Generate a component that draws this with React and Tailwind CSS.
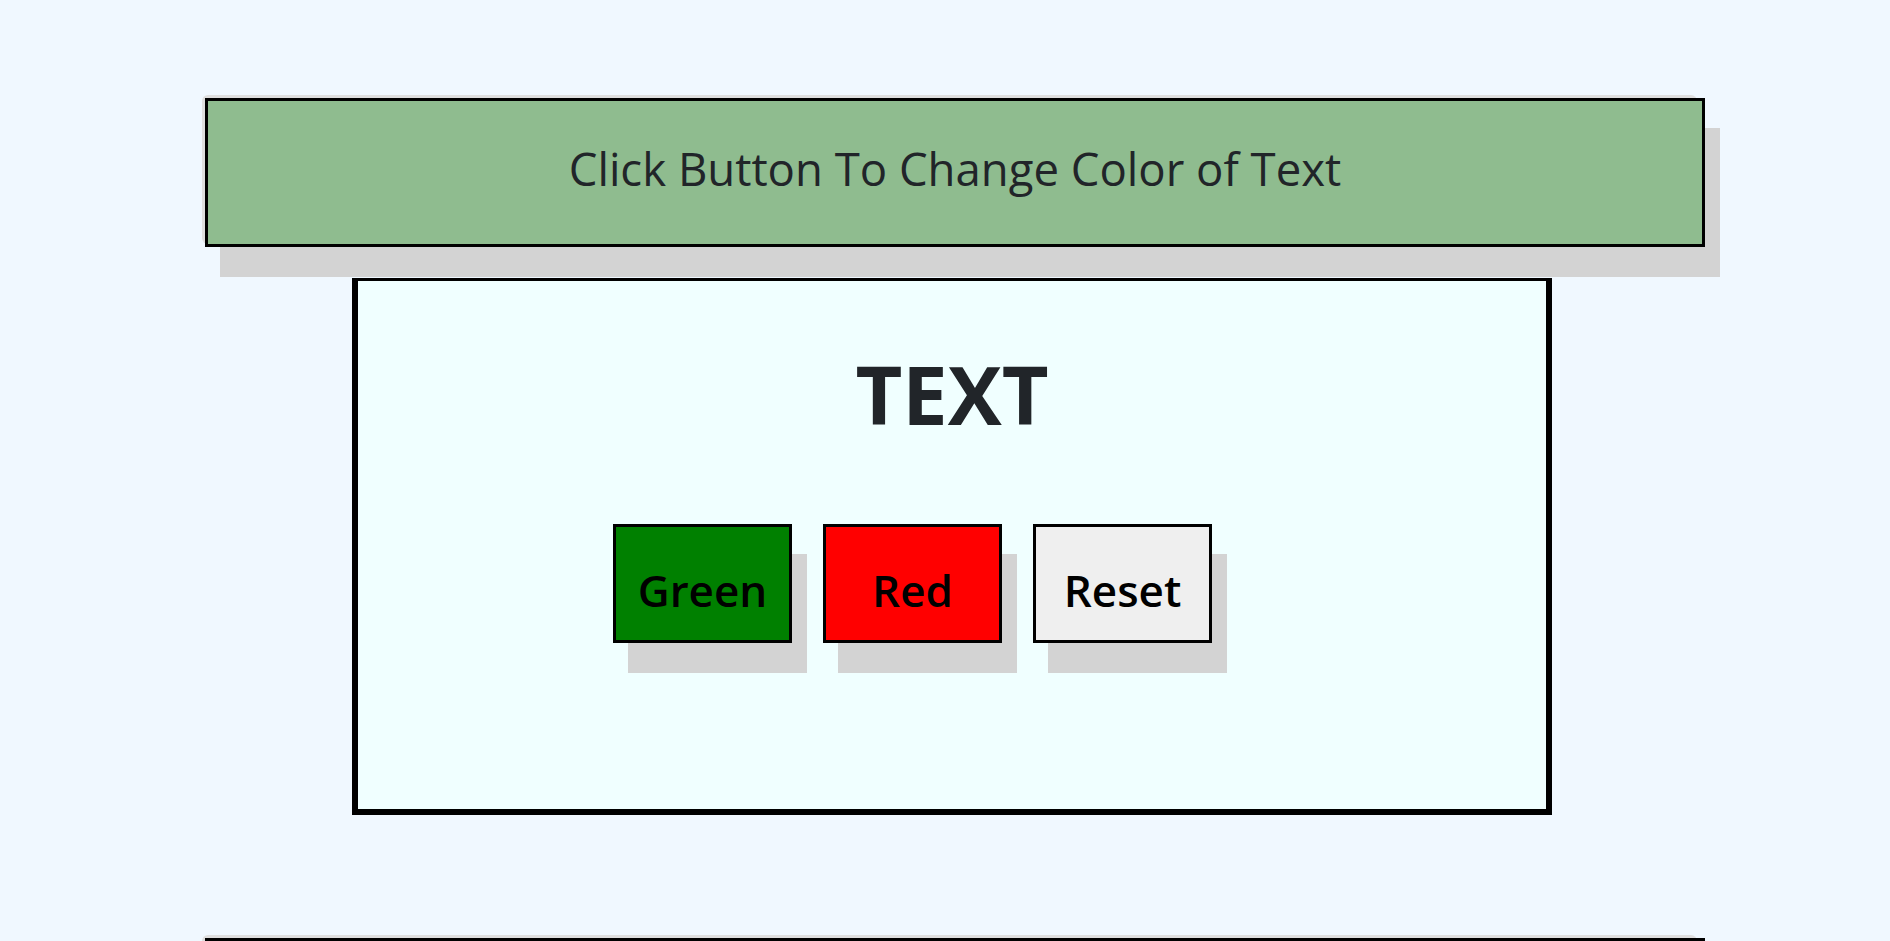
export default function App() {
  const font = { fontFamily: '"Open Sans", "Noto Sans", sans-serif' };
  const btn =
    "w-[179px] h-[119px] border-[3px] border-black text-black text-[44px] font-semibold shadow-[15px_30px_0_#d3d3d3] flex items-center justify-center pt-[12px]";
  return (
    <div className="min-h-screen bg-[#f0f8ff] pt-[95px] overflow-hidden" style={font}>
      <div className="ml-[202px] w-[1495px] h-[149px] rounded-md bg-[#dfdfdf]">
        <div className="relative left-[3px] top-[3px] w-[1500px] h-[149px] border-[3px] border-black bg-[#8fbc8f] shadow-[15px_30px_0_#d3d3d3] flex items-center justify-center pb-[9px]">
          <span className="text-[45.5px] text-[#212529]">Click Button To Change Color of Text</span>
        </div>
      </div>

      <div className="ml-[352px] mt-[34px] w-[1200px] h-[537px] border-[6px] border-t-[3px] border-black bg-[#f0ffff] flex flex-col">
        <h1 className="mt-[72px] text-center text-[81px] leading-none font-bold text-[#212529]">TEXT</h1>
        <div className="mt-[90px] ml-[255px] flex gap-[31px]">
          <button className={`${btn} bg-[#008000]`}>Green</button>
          <button className={`${btn} bg-[#ff0000]`}>Red</button>
          <button className={`${btn} bg-[#efefef]`}>Reset</button>
        </div>
      </div>

      <div className="ml-[202px] mt-[120px] w-[1495px] h-[149px] rounded-md bg-[#dfdfdf]">
        <div className="relative left-[3px] top-[3px] w-[1500px] h-[149px] border-[3px] border-black bg-[#8fbc8f] shadow-[15px_30px_0_#d3d3d3]"></div>
      </div>
    </div>
  );
}
